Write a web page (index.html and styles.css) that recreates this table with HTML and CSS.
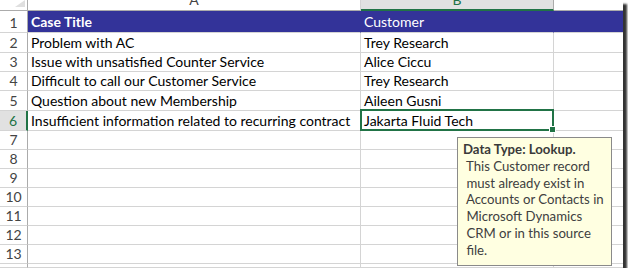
FILE: index.html
```html
<!DOCTYPE html>
<html>
<head>
<meta charset="utf-8">
<link rel="stylesheet" href="styles.css">
</head>
<body>
<div class="frame">
  <div class="sheet">
    <div class="corner"><span class="tri"></span></div>
    <div class="ch"><span>A</span></div>
    <div class="ch sel"><span>B</span></div>
    <div class="ch last"></div>

    <div class="rh">1</div>
    <div class="c hd bold">Case Title</div>
    <div class="c hd">Customer</div>
    <div class="c hd last"></div>

    <div class="rh">2</div>
    <div class="c">Problem with AC</div>
    <div class="c">Trey Research</div>
    <div class="c last"></div>

    <div class="rh">3</div>
    <div class="c">Issue with unsatisfied Counter Service</div>
    <div class="c">Alice Ciccu</div>
    <div class="c last"></div>

    <div class="rh">4</div>
    <div class="c">Difficult to call our Customer Service</div>
    <div class="c">Trey Research</div>
    <div class="c last"></div>

    <div class="rh">5</div>
    <div class="c">Question about new Membership</div>
    <div class="c">Aileen Gusni</div>
    <div class="c last"></div>

    <div class="rh active">6</div>
    <div class="c">Insufficient information related to recurring contract</div>
    <div class="c current">Jakarta Fluid Tech<span class="selbox"><span class="handle"></span></span></div>
    <div class="c last"></div>

    <div class="rh">7</div><div class="c"></div><div class="c"></div><div class="c last"></div>
    <div class="rh">8</div><div class="c"></div><div class="c"></div><div class="c last"></div>
    <div class="rh">9</div><div class="c"></div><div class="c"></div><div class="c last"></div>
    <div class="rh">10</div><div class="c"></div><div class="c"></div><div class="c last"></div>
    <div class="rh">11</div><div class="c"></div><div class="c"></div><div class="c last"></div>
    <div class="rh">12</div><div class="c"></div><div class="c"></div><div class="c last"></div>
    <div class="rh">13</div><div class="c"></div><div class="c"></div><div class="c last"></div>
    <div class="rh"></div><div class="c"></div><div class="c"></div><div class="c last"></div>
  </div>
  <div class="tip">
    <div class="tip-title">Data Type: Lookup.</div>
    <div class="tip-body">&nbsp;This Customer record<br>&nbsp;must already exist in<br>&nbsp;Accounts or Contacts in<br>&nbsp;Microsoft Dynamics<br>&nbsp;CRM or in this source<br>&nbsp;file.</div>
  </div>
</div>
</body>
</html>
```

FILE: styles.css
```css
html, body {
  margin: 0;
  padding: 0;
  background: #ffffff;
}

.frame {
  position: relative;
  width: 623px;
  height: 268px;
  overflow: hidden;
  background: #ffffff;
  box-shadow: 4px 4px 2px rgba(0, 0, 0, 0.8);
  font-family: Lato, "Liberation Sans", sans-serif;
  font-size: 14px;
  color: #000000;
}

.sheet {
  display: grid;
  grid-template-columns: 28px 333px 193px 69px;
  grid-template-rows: 11px 22px 20px 19px 19px 20px 20px 19px 19px 19px 19px 19px 19px 19px 1fr;
  height: 100%;
}

.sheet > div {
  box-sizing: border-box;
  border-right: 1px solid #d4d4d4;
  border-bottom: 1px solid #d4d4d4;
  overflow: visible;
  white-space: nowrap;
}

.corner {
  position: relative;
  background: #ffffff;
  border-right: 1px solid #ababab !important;
  border-bottom: 1px solid #ababab !important;
}

.tri {
  position: absolute;
  right: 2px;
  bottom: 3px;
  width: 0;
  height: 0;
  border-left: 10px solid transparent;
  border-bottom: 7px solid #dfdfdf;
}

.ch {
  overflow: hidden !important;
  text-align: center;
  color: #444444;
  background: #ffffff;
  border-bottom: 1px solid #ababab !important;
}

.ch span {
  display: block;
  line-height: 12px;
  margin-top: -6px;
}

.ch.sel {
  background: #e1e1e1;
  color: #217346;
  border-bottom: 2px solid #217346 !important;
  border-right-color: #ababab !important;
}

.ch.last {
  border-right: none !important;
}

.rh {
  display: flex;
  align-items: flex-end;
  justify-content: center;
  padding-bottom: 1px;
  line-height: 16px;
  color: #444444;
  background: #ffffff;
  border-right: 1px solid #ababab !important;
}

.rh.active {
  background: #e1e1e1;
  color: #217346;
  border-right: 2px solid #217346 !important;
}

.c {
  display: flex;
  align-items: flex-end;
  padding: 0 0 1px 3px;
  line-height: 16px;
}

.c.last {
  border-right: none !important;
}

.c.hd {
  background: #333399;
  color: #ffffff;
  border-right-color: #333399 !important;
  padding-bottom: 2px;
}

.c.bold {
  font-weight: bold;
}

.c.current {
  position: relative;
}

.selbox {
  position: absolute;
  left: -1px;
  top: -2px;
  right: -1px;
  bottom: -1px;
  border: 2px solid #217346;
  z-index: 2;
}

.handle {
  position: absolute;
  right: -4px;
  bottom: -4px;
  width: 5px;
  height: 5px;
  background: #217346;
  border: 1px solid #ffffff;
}

.tip {
  position: absolute;
  left: 457px;
  top: 137px;
  width: 155px;
  height: 129px;
  box-sizing: border-box;
  background: #ffffe1;
  border: 1px solid #8a8a8a;
  padding: 3px 0 0 5px;
  color: #404040;
  font-size: 13.2px;
  line-height: 16.8px;
  z-index: 3;
}

.tip-title {
  font-weight: bold;
  color: #3a3a3a;
}
```
